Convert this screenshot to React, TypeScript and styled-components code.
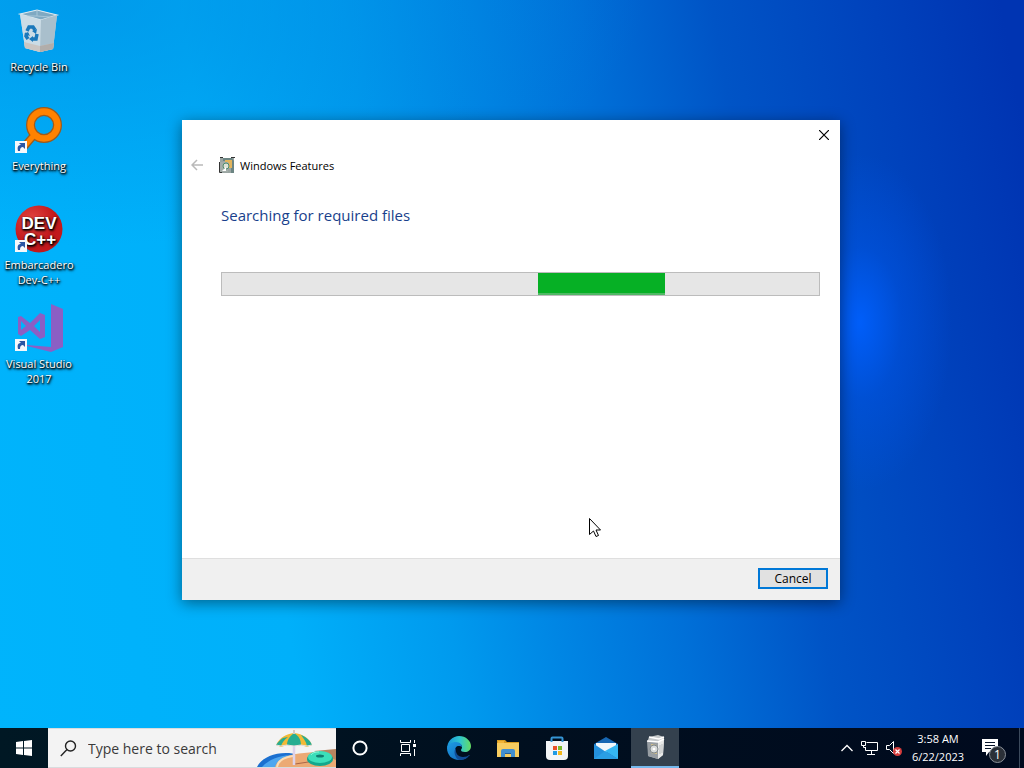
import { type FC, ReactNode } from "react";
import styled, { createGlobalStyle } from "styled-components";

const GlobalStyle = createGlobalStyle`
  * {
    box-sizing: border-box;
  }

  body {
    margin: 0;
    font-family: "Open Sans", "Noto Sans", sans-serif;
    font-size: 11px;
    color: #000;
  }

  button,
  input {
    font: inherit;
    color: inherit;
  }

  svg {
    display: block;
    flex: none;
  }
`;

const Screen = styled.div`
  display: flex;
  flex-direction: column;
  height: 100vh;
  overflow: hidden;
  background:
    radial-gradient(ellipse 9% 22% at 84% 42%, rgba(0, 96, 255, 0.9), rgba(0, 88, 240, 0.4) 45%, rgba(0, 80, 220, 0) 100%),
    radial-gradient(ellipse 55% 32% at 8% 0%, rgba(0, 140, 225, 0.6), rgba(0, 140, 225, 0) 100%),
    linear-gradient(80deg, #00b4fc 0%, #00b0fa 27%, #009aee 41%, #0086e4 50%, #0070d8 61%, #0054c6 73%, #0042bc 87%, #0034b2 98%);
`;

const Workspace = styled.main`
  position: relative;
  flex: 1;
  min-height: 0;
`;

const IconColumn = styled.nav`
  display: flex;
  flex-direction: column;
  width: 78px;
`;

const Shortcut = styled.button`
  display: flex;
  flex-direction: column;
  align-items: center;
  gap: 4px;
  height: 99px;
  padding: 7px 0 0;
  border: 0;
  background: none;
  color: #fff;
  line-height: 15px;
  text-shadow: 0 1px 2px #000, 1px 1px 2px #000, 1px 2px 3px rgba(0, 0, 0, 0.6);
`;

const Dialog = styled.section`
  position: absolute;
  inset: 120px 184px 128px 182px;
  display: flex;
  flex-direction: column;
  background: #fff;
  box-shadow: 0 3px 14px rgba(0, 0, 0, 0.45);
`;

const TitleBar = styled.div`
  display: flex;
  justify-content: flex-end;
`;

const CloseButton = styled.button`
  display: flex;
  padding: 10px 11px;
  border: 0;
  background: none;
`;

const DialogHeader = styled.header`
  display: flex;
  align-items: center;
  gap: 5px;
  height: 30px;
  padding-left: 9px;
`;

const BackButton = styled.button`
  display: flex;
  margin-right: 10px;
  padding: 0;
  border: 0;
  background: none;
`;

const DialogTitle = styled.h1`
  margin: 0;
  font-size: 11px;
  font-weight: 400;
`;

const DialogBody = styled.div`
  flex: 1;
  padding: 24px 20px 0 39px;
`;

const Heading = styled.h2`
  margin: 0 0 46px;
  font-size: 15px;
  line-height: 22px;
  font-weight: 400;
  color: #193f8c;
`;

const ProgressTrack = styled.div`
  display: flex;
  height: 24px;
  border: 1px solid #bcbcbc;
  background: #e6e6e6;
`;

const ProgressChunk = styled.div`
  width: 127px;
  border-bottom: 2px solid #4fb964;
  background: #06b025;
`;

const DialogFooter = styled.footer`
  display: flex;
  justify-content: flex-end;
  align-items: flex-start;
  height: 42px;
  padding: 9px 12px;
  border-top: 1px solid #dfdfdf;
  background: #f0f0f0;
`;

const CancelButton = styled.button`
  width: 70px;
  height: 21px;
  padding: 0;
  border: 2px solid #0078d7;
  background: #e1e1e1;
  font-size: 12px;
  line-height: 17px;
`;

const Pointer = styled.div`
  position: absolute;
  left: 589px;
  top: 518px;
`;

const Taskbar = styled.footer`
  display: flex;
  height: 40px;
  background: linear-gradient(90deg, #001824, #000f1f 50%, #000a1e);
  color: #fff;
`;

const PinnedApps = styled.div`
  display: flex;
  gap: 1px;
  margin-left: 3px;
`;

const TaskButton = styled.button<{ $active?: boolean }>`
  display: flex;
  align-items: center;
  justify-content: center;
  width: 48px;
  padding: 0;
  border: 0;
  border-bottom: ${({ $active }) => ($active ? "2px solid #76b9ed" : "0")};
  background: ${({ $active }) => ($active ? "#34414e" : "none")};
`;

const SearchBox = styled.label`
  display: flex;
  align-items: center;
  gap: 11px;
  width: 288px;
  padding-left: 12px;
  border: 1px solid #d8dcde;
  border-width: 1px 0;
  background: #f3f3f3;
  color: #333;
`;

const SearchInput = styled.input`
  flex: 1;
  min-width: 0;
  padding: 0;
  border: 0;
  outline: 0;
  background: none;
  font-size: 14px;

  &::placeholder {
    color: #3a3a3a;
    opacity: 1;
  }
`;

const Tray = styled.div`
  display: flex;
  align-items: center;
  margin-left: auto;
  border-right: 1px solid #3c4a5c;
  margin-right: 4px;
`;

const TrayButton = styled.button<{ $wide?: boolean }>`
  display: flex;
  padding: ${({ $wide }) => ($wide ? "0 12px" : "0 4px")};
  border: 0;
  background: none;
`;

const Clock = styled.time`
  width: 64px;
  text-align: center;
  line-height: 18px;
`;

const ShortcutArrow = () => (
  <g>
    <path d="M0 35h12v12H0z" fill="#f6f8fb" />
    <path d="M3 45c-1-4 0-6 3-6l-2-2h6v6l-2-2c-2 0-3 1-3 4z" fill="#2a56a4" />
  </g>
);

const RecycleBinIcon = () => (
  <svg width="48" height="48" viewBox="0 0 48 48">
    <path d="M5 7 22 3l20 5-4 34-13 3-15-4z" fill="#c7d6df" />
    <path d="M5 7l17-4 20 5-16 5z" fill="#7fa9c2" stroke="#dce9f0" strokeWidth="1.2" />
    <path d="M22 3v6l-10 0M22 9l13 1" stroke="#a8c6d8" fill="none" />
    <path d="M5 7l21 6-1 32-15-4z" fill="#cbdce6" />
    <path d="M26 13l16-5-4 34-13 3z" fill="#a9bfcc" />
    <path d="M9 35l16 4 14-3-1 6-13 3-15-4z" fill="#cbc6c3" />
    <path d="M25 39l14-3-1 6-13 3z" fill="#b1adaa" />
    <g fill="none" stroke="#1a78bb" strokeWidth="3.500">
      <path d="M12 24l2-4 4 0 2 3" />
      <path d="M22 27l-1 5-4 0" />
      <path d="M13 32l-2-3 1-3" />
    </g>
    <path d="M17 24l5-2-1 5zM18 29v6l-4-3zM9 27l4-2 2 4z" fill="#1a78bb" />
  </svg>
);

const EverythingIcon = () => (
  <svg width="48" height="48" viewBox="0 0 48 48">
    <path d="M20 28 8 42" stroke="#9c5a1c" strokeWidth="8" />
    <circle cx="29" cy="19" r="13.500" fill="none" stroke="#9c5a1c" strokeWidth="9" />
    <path d="M20 28 8 42" stroke="#ff8200" strokeWidth="5" />
    <circle cx="29" cy="19" r="13.500" fill="none" stroke="#ff8200" strokeWidth="6.500" />
    <ShortcutArrow />
  </svg>
);

const DevCppIcon = () => (
  <svg width="48" height="48" viewBox="0 0 48 48">
    <defs>
      <radialGradient id="devRed" cx="35%" cy="30%">
        <stop offset="0" stopColor="#e24440" />
        <stop offset="1" stopColor="#c2191c" />
      </radialGradient>
    </defs>
    <circle cx="24" cy="24" r="23.500" fill="url(#devRed)" />
    <g fill="#fff" fontFamily="Liberation Sans, sans-serif" fontWeight="700" fontSize="17" textAnchor="middle">
      <text x="24" y="24">DEV</text>
      <text x="25" y="40">C++</text>
    </g>
    <ShortcutArrow />
  </svg>
);

const VisualStudioIcon = () => (
  <svg width="48" height="48" viewBox="0 0 48 48">
    <path d="M36 0 48 5v38l-12 5-24-6v-1l24 2z" fill="#8b5fc4" />
    <path fillRule="evenodd" d="M3 13l3-1 9 7 10-10 5 2v22l-5 2-10-9-9 6-3-2zM6 17v9l5-4zM25 16l-6 6 6 6z" fill="#8b5fc4" />
    <ShortcutArrow />
  </svg>
);

const InstallerIcon = () => (
  <svg width="16" height="16" viewBox="0 0 16 16">
    <path d="M1 1h14v15H1z" fill="#9aa5a2" />
    <path d="M4 1h9l2 3v12h-3V4H4z" fill="#6c8583" />
    <path d="M6 3h7v8h-3V6H6z" fill="#e2b45c" />
    <path d="M1 5h8v10H1z" fill="#a3ada9" />
    <circle cx="7" cy="9" r="3" fill="#dfe2d6" stroke="#4e8b6c" />
    <path d="M.5 5v10.500H3M1 .5h3M12 .5h4" stroke="#333" fill="none" />
    <path d="M3 14l4-4v4z" fill="#fff" />
  </svg>
);

const StartIcon = () => (
  <svg width="16" height="16" viewBox="0 0 16 16" fill="#fff">
    <path d="M0 2l7-1v6.500H0zM8 1l8-1v7.500H8zM0 8.500h7V15l-7-1zM8 8.500h8V16l-8-1z" />
  </svg>
);

const SearchIcon = () => (
  <svg width="17" height="17" viewBox="0 0 17 17" fill="none" stroke="#222" strokeWidth="1.4">
    <circle cx="10.500" cy="6" r="5" />
    <path d="M7 9.600.8 16" />
  </svg>
);

const BeachArt = () => (
  <svg width="79" height="38" viewBox="0 0 79 38">
    <path d="M0 38c4-9 17-15 32-14l13 2-21 12z" fill="#1b70d0" />
    <path d="M5 38c7-8 19-12 32-12l-11 12z" fill="#4ea6ef" />
    <path d="M18 38c2-8 13-13 29-14l32-3v17z" fill="#ecaa74" />
    <path d="M20 38c1-7 8-10 16-11" fill="none" stroke="#faddb5" strokeWidth="2" />
    <path d="M57 22l22-2v11z" fill="#b88460" />
    <path d="M38 35l20-3" stroke="#aa6548" />
    <path d="M37 8v28" stroke="#ded2ea" strokeWidth="2.500" />
    <path d="M19 16C23 8 29 5 37 4c9 1 15 5 18 12l-5 2-6-2-7 1-7-1-6 2z" fill="#f1b936" />
    <path d="M26 9c-3 2-5 4-7 7l5 1c1-3 3-6 7-9zM30 16c0-5 3-9 7-12 5 3 7 7 7 12l-7 1zM44 6c5 2 9 5 11 10l-5 1c-1-5-4-8-6-11z" fill="#27ad91" />
    <path d="M19 16l5 1 6-1 7 1 7-1 6 1 5-1" stroke="#e7dfe0" fill="none" />
    <path d="M37 1v4" stroke="#d5c9c4" strokeWidth="2" />
    <ellipse cx="63" cy="30" rx="13" ry="7" fill="#12a78c" />
    <ellipse cx="63" cy="28" rx="12" ry="6" fill="#3bdfba" />
    <ellipse cx="63" cy="27" rx="4" ry="1.500" fill="#117c70" />
    <path d="M54 26c2-3 6-3 8-3" stroke="#8ff5d9" fill="none" />
  </svg>
);

const CortanaIcon = () => (
  <svg width="16" height="16" viewBox="0 0 16 16">
    <circle cx="8" cy="8" r="6.600" fill="none" stroke="#fff" strokeWidth="2" />
  </svg>
);

const TaskViewIcon = () => (
  <svg width="16" height="16" viewBox="0 0 16 16" fill="none" stroke="#fff">
    <path d="M.5 0v2.500h10V0M.5 16v-2.500h10V16M1.500 4.500h8v7h-8zM14.500 0v3M14.500 9v7" />
    <path d="M13 4h3v3h-3z" fill="#fff" stroke="none" />
  </svg>
);

const EdgeIcon = () => (
  <svg width="24" height="24" viewBox="0 0 24 24">
    <defs>
      <linearGradient id="edgeTop" x1="0" x2="1">
        <stop offset="0" stopColor="#1893dc" />
        <stop offset=".55" stopColor="#30c7ce" />
        <stop offset="1" stopColor="#65dc62" />
      </linearGradient>
      <linearGradient id="edgeBody" x1="0" y1="0" x2="1" y2="1">
        <stop offset="0" stopColor="#1d9de4" />
        <stop offset="1" stopColor="#1262b8" />
      </linearGradient>
    </defs>
    <path d="M0 13C0 5 6 0 12 0c7 0 12 5 12 10 0 4-3 6-6 6-3 0-4-1-4-2s1-1 1-3c0-2-2-4-6-4-5 0-8 3-9 6z" fill="url(#edgeTop)" />
    <path d="M0 12c1-4 5-6 9-6 4 0 6 3 6 5-1-1-2-1-3-1-3 0-4 2-4 5 0 5 4 8 10 7 1 0 2-1 3-1-2 2-5 3-9 3C5 24 0 19 0 12z" fill="url(#edgeBody)" />
    <path d="M9 12c-1 5 2 9 7 9 3 0 5-1 6-2 1 0 1 0 0 1-3 3-7 4-10 4-4-2-6-9-3-12z" fill="#104c96" />
  </svg>
);

const FolderIcon = () => (
  <svg width="22" height="19" viewBox="0 0 22 19">
    <path d="M0 1h8l2 2h12v4H0z" fill="#d79b20" />
    <path d="M0 4h22v14H0z" fill="#f8cd60" />
    <path d="M1 2h6v2H1z" fill="#f2b437" />
    <path d="M4 18v-6q0-2 2-2h10q2 0 2 2v6h-4v-4H8v4z" fill="#428fd0" />
    <path d="M8 14h6v1H8z" fill="#275f94" />
  </svg>
);

const StoreIcon = () => (
  <svg width="24" height="24" viewBox="0 0 24 24">
    <path d="M6.500 6V2.500q0-1 1-1h9q1 0 1 1V6" fill="none" stroke="#3495d5" strokeWidth="2" />
    <path d="M1 5h22v15q0 4-4 4H5q-4 0-4-4z" fill="#f3f5f7" />
    <path d="M8 10h4v4H8z" fill="#e95229" />
    <path d="M13 10h4v4h-4z" fill="#7cbb2d" />
    <path d="M8 15h4v4H8z" fill="#209be4" />
    <path d="M13 15h4v4h-4z" fill="#f6b91c" />
    <path d="M6.500 5v1M17.500 5v1" stroke="#3495d5" strokeWidth="2" />
  </svg>
);

const MailIcon = () => (
  <svg width="24" height="22" viewBox="0 0 24 22">
    <path d="M0 7l12-7 12 7v15H0z" fill="#1767b3" />
    <path d="M2 6h20v4l-10 6L2 10z" fill="#f1f7fb" />
    <path d="M0 7l12 8 12 7H0z" fill="#2490dc" />
    <path d="M24 7v15L11 14z" fill="#35b6f2" />
    <path d="M0 22l11-8 13 8z" fill="#2a9ee4" />
  </svg>
);

const PackageIcon = () => (
  <svg width="20" height="24" viewBox="0 0 20 24">
    <path d="M4 2l9-2 6 2-1 18-5 4-10-3V5z" fill="#c4c8ca" />
    <path d="M2 6l11 1v17L3 21z" fill="#989ea3" />
    <path d="M13 7l6-3-1 16-5 4z" fill="#e8e9e8" />
    <path d="M4 2l10 2 5-2M2 6l11 1 6-3" stroke="#fff" strokeWidth="1.4" fill="none" />
    <path d="M6 9l6 1v9l-6-1z" fill="#d8c489" />
    <circle cx="9" cy="14" r="4" fill="#d9dcdb" stroke="#7f878b" />
    <circle cx="9" cy="14" r="1.300" fill="#fff" />
    <path d="M15 10v9M17 9v9" stroke="#b9bdbf" />
  </svg>
);

const ChevronIcon = () => (
  <svg width="12" height="8" viewBox="0 0 12 8" fill="none" stroke="#fff" strokeWidth="1.3">
    <path d="M.5 7 6 1.500 11.500 7" />
  </svg>
);

const NetworkIcon = () => (
  <svg width="17" height="14" viewBox="0 0 17 14" fill="none" stroke="#fff">
    <path d="M5.500 1.500h11v8h-12V6M.5.5h4v4h-4zM2.500 4.500v2h2M10.500 10v3M6 13.500h8" />
  </svg>
);

const VolumeMutedIcon = () => (
  <svg width="16" height="16" viewBox="0 0 16 16">
    <path d="M.5 5.500h3l4-4v12l-4-4h-3z" fill="none" stroke="#fff" />
    <circle cx="11.500" cy="11.500" r="4.500" fill="#d63c3c" />
    <path d="M9.500 9.500l4 4M13.500 9.500l-4 4" stroke="#fff" strokeWidth="1.2" />
  </svg>
);

const NotificationIcon = () => (
  <svg width="25" height="32" viewBox="0 -6 25 32">
    <path d="M0 1h16v13H7l-3 4v-4H0z" fill="#fff" />
    <path d="M3 4.500h10M3 7.500h10M3 10.500h6" stroke="#07142b" />
    <circle cx="15.500" cy="16.500" r="8" fill="#2b3038" stroke="#8a9099" />
    <text x="15.500" y="21" fill="#fff" fontSize="12" textAnchor="middle">1</text>
  </svg>
);

interface DesktopIconProps {
  children: ReactNode;
  label: string;
}

const DesktopIcon: FC<DesktopIconProps> = ({ children, label }) => (
  <Shortcut type="button">
    {children}
    <span>{label}</span>
  </Shortcut>
);

interface MarqueeProps {
  position: number;
}

const Marquee: FC<MarqueeProps> = ({ position }) => (
  <ProgressTrack role="progressbar" aria-label="Searching for required files">
    <ProgressChunk style={{ marginLeft: `${position}%` }} />
  </ProgressTrack>
);

const FeaturesDialog = () => (
  <Dialog role="dialog" aria-labelledby="dialog-title">
    <TitleBar>
      <CloseButton type="button" aria-label="Close">
        <svg width="10" height="10" viewBox="0 0 10 10" stroke="#000" strokeWidth="1.2">
          <path d="M0 0l10 10M10 0 0 10" />
        </svg>
      </CloseButton>
    </TitleBar>
    <DialogHeader>
      <BackButton type="button" aria-label="Back" disabled>
        <svg width="13" height="12" viewBox="0 0 13 12" fill="none" stroke="#b9b9b9" strokeWidth="1.5">
          <path d="M12 6H1M6 1 1 6l5 5" />
        </svg>
      </BackButton>
      <InstallerIcon />
      <DialogTitle id="dialog-title">Windows Features</DialogTitle>
    </DialogHeader>
    <DialogBody>
      <Heading>Searching for required files</Heading>
      <Marquee position={53} />
    </DialogBody>
    <DialogFooter>
      <CancelButton type="button">Cancel</CancelButton>
    </DialogFooter>
  </Dialog>
);

export default function App() {
  return (
    <>
      <GlobalStyle />
      <Screen>
        <Workspace>
          <IconColumn aria-label="Desktop">
            <DesktopIcon label="Recycle Bin"><RecycleBinIcon /></DesktopIcon>
            <DesktopIcon label="Everything"><EverythingIcon /></DesktopIcon>
            <DesktopIcon label="Embarcadero Dev-C++"><DevCppIcon /></DesktopIcon>
            <DesktopIcon label="Visual Studio 2017"><VisualStudioIcon /></DesktopIcon>
          </IconColumn>
          <FeaturesDialog />
          <Pointer>
            <svg width="12" height="20" viewBox="0 0 12 20">
              <path d="M.5.5v16l4-3.500 2.500 5.500 2.500-1-2.500-5.500h4.500z" fill="#fff" stroke="#000" />
            </svg>
          </Pointer>
        </Workspace>
        <Taskbar>
          <TaskButton type="button" aria-label="Start"><StartIcon /></TaskButton>
          <SearchBox>
            <SearchIcon />
            <SearchInput type="text" placeholder="Type here to search" aria-label="Search" />
            <BeachArt />
          </SearchBox>
          <TaskButton type="button" aria-label="Cortana"><CortanaIcon /></TaskButton>
          <TaskButton type="button" aria-label="Task View"><TaskViewIcon /></TaskButton>
          <PinnedApps>
            <TaskButton type="button" aria-label="Microsoft Edge"><EdgeIcon /></TaskButton>
            <TaskButton type="button" aria-label="File Explorer"><FolderIcon /></TaskButton>
            <TaskButton type="button" aria-label="Microsoft Store"><StoreIcon /></TaskButton>
            <TaskButton type="button" aria-label="Mail"><MailIcon /></TaskButton>
            <TaskButton type="button" aria-label="Windows Features" $active><PackageIcon /></TaskButton>
          </PinnedApps>
          <Tray>
            <TrayButton type="button" aria-label="Show hidden icons"><ChevronIcon /></TrayButton>
            <TrayButton type="button" aria-label="Network"><NetworkIcon /></TrayButton>
            <TrayButton type="button" aria-label="Volume"><VolumeMutedIcon /></TrayButton>
            <Clock>3:58 AM<br />6/22/2023</Clock>
            <TrayButton type="button" aria-label="Notifications" $wide><NotificationIcon /></TrayButton>
          </Tray>
        </Taskbar>
      </Screen>
    </>
  );
}
